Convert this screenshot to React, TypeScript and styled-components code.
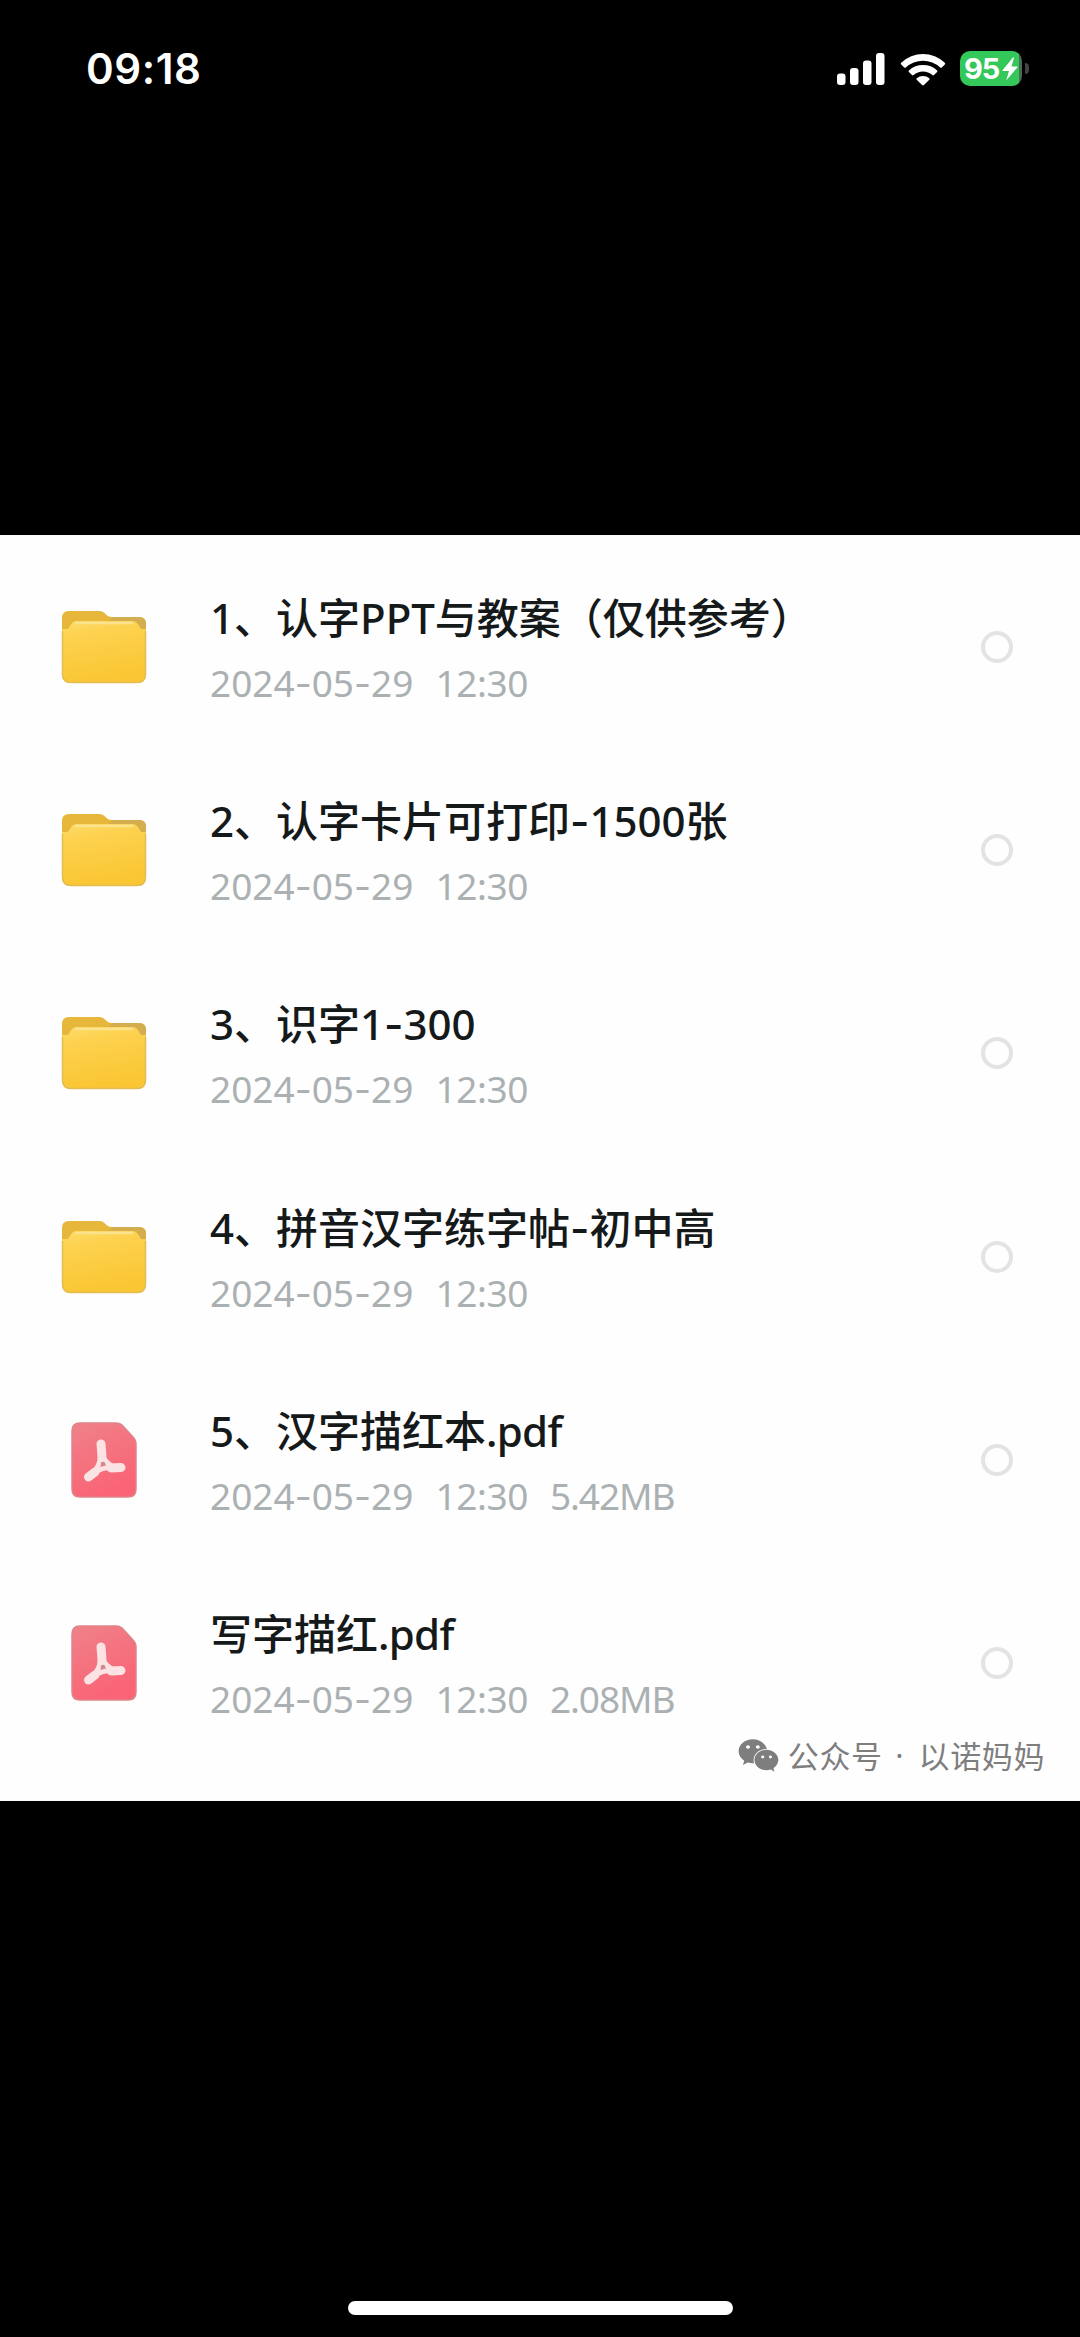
import React from 'react';
import styled, { createGlobalStyle } from 'styled-components';
import { FaWeixin } from 'react-icons/fa';

const GlobalStyle = createGlobalStyle`
  * { box-sizing: border-box; }
  html, body { margin: 0; padding: 0; background: #000; }
  body { font-family: "Noto Sans", "Noto Sans CJK SC", sans-serif; }
`;

const Screen = styled.div`
  width: 1080px;
  height: 2337px;
  background: #000;
  display: flex;
  flex-direction: column;
  align-items: center;
  overflow: hidden;
`;

const StatusBar = styled.header`
  width: 100%;
  height: 535px;
  flex: none;
  display: flex;
  justify-content: space-between;
  align-items: flex-start;
  padding: 43px 51px 0 86px;
`;

const Clock = styled.time`
  font: 600 42px/52px Inter, sans-serif;
  color: #fff;
  letter-spacing: 0.6px;
`;

const StatusIcons = styled.div`
  display: flex;
  align-items: center;
  height: 51px;
`;

const SignalIcon = styled.svg`
  width: 48px;
  height: 32px;
  margin-right: 15px;
`;

const WifiIcon = styled.svg`
  width: 46px;
  height: 34px;
  margin-right: 14px;
`;

const Battery = styled.div`
  display: flex;
  align-items: center;
  justify-content: center;
  width: 62px;
  height: 35px;
  border-radius: 10px;
  background: linear-gradient(90deg, #34c759 0 59px, #4b6b52 59px);
  color: #fff;
  font: 700 29px/35px Inter, sans-serif;
  letter-spacing: -1.2px;
`;

const BoltIcon = styled.svg`
  width: 16px;
  height: 24px;
  margin-left: 3px;
`;

const BatteryTip = styled.div`
  width: 4px;
  height: 11px;
  margin-left: 3px;
  border-radius: 0 4px 4px 0;
  background: #444;
`;

const Panel = styled.main`
  position: relative;
  width: 100%;
  height: 1266px;
  flex: none;
  padding-top: 10px;
  background: #fefefe;
`;

const FileRow = styled.article`
  display: grid;
  grid-template-columns: 88px 1fr 32px;
  column-gap: 62px;
  align-items: center;
  height: 203.33px;
  padding: 0 67px 0 60px;
`;

const IconCell = styled.div`
  display: flex;
  justify-content: center;
`;

const FileText = styled.div`
  display: flex;
  flex-direction: column;
  gap: 5px;
  padding-top: 7px;
  white-space: nowrap;
`;

const Title = styled.h2`
  margin: 0;
  height: 60px;
  font-family: "Noto Sans", "Noto Sans CJK SC", sans-serif;
  font-weight: 500;
  font-size: 42px;
  line-height: 60px;
  color: #15191a;
`;

const Extension = styled.span`
  letter-spacing: -0.7px;
`;

const Meta = styled.div`
  display: flex;
  gap: 22px;
  height: 60px;
  font-size: 37px;
  line-height: 60px;
  color: #abb1b2;
`;

const Time = styled.span`
  letter-spacing: -0.4px;
`;

const Size = styled.span`
  letter-spacing: -1.1px;
`;

const Dash = styled.span`
  font-family: Inter, sans-serif;
`;

const Ring = styled.span`
  width: 32px;
  height: 32px;
  border: 4px solid #e3e3e3;
  border-radius: 50%;
`;

const Watermark = styled.footer`
  position: absolute;
  right: 35px;
  bottom: 24px;
  display: flex;
  align-items: center;
  height: 44px;
  color: #7e7e7e;
  font: 400 31px/44px "Noto Sans CJK SC", sans-serif;
  letter-spacing: 0.6px;

  svg { width: 43px; height: 37px; margin-right: 8px; }
`;

const WatermarkDot = styled.span`
  width: 36px;
  padding-right: 2px;
  text-align: center;
  font-family: "Noto Sans", sans-serif;
`;

const HomeIndicator = styled.div`
  width: 385px;
  height: 14px;
  margin-top: auto;
  margin-bottom: 22px;
  border-radius: 7px;
  background: #fff;
`;

type FileItem = { kind: 'folder' | 'pdf'; title: string; extension?: string; size?: string };

const files: FileItem[] = [
  { kind: 'folder', title: '1、认字PPT与教案（仅供参考）' },
  { kind: 'folder', title: '2、认字卡片可打印-1500张' },
  { kind: 'folder', title: '3、识字1-300' },
  { kind: 'folder', title: '4、拼音汉字练字帖-初中高' },
  { kind: 'pdf', title: '5、汉字描红本', extension: '.pdf', size: '5.42MB' },
  { kind: 'pdf', title: '写字描红', extension: '.pdf', size: '2.08MB' },
];

/** Sets hyphens in the wider dash style, leaving the rest of the text as is. */
function Dashed({ text }: { text: string }) {
  return (
    <span>
      {text.split('-').map((part, i) => (
        <React.Fragment key={i}>
          {i > 0 && <Dash>-</Dash>}
          {part}
        </React.Fragment>
      ))}
    </span>
  );
}

function FolderIcon() {
  return (
    <svg width="86" height="74" viewBox="0 0 86 74">
      <defs>
        <linearGradient id="folderFront" x1="0" y1="0" x2="0.25" y2="1">
          <stop offset="0" stopColor="#fddc6c" />
          <stop offset="0.25" stopColor="#fdd250" />
          <stop offset="1" stopColor="#fac633" />
        </linearGradient>
      </defs>
      <path d="M1 22V8q0-7 7-7h30q4 0 6.500 3t6.500 3h27q7 0 7 7v8z" fill="#e7b73c" />
      <path d="M52 7h26q7 0 7 7v6H76l-4-8H46z" fill="#d4ae4e" />
      <path d="M1 19h6l4-6q2-2 5-2h56q3 0 5 3l3 5h5v45q0 9-9 9H10q-9 0-9-9z" fill="url(#folderFront)" />
      <path d="M1.500 21v43q0 8.500 8.500 8.500h66q8.500 0 8.500-8.500V21" fill="none" stroke="#e2bd55" strokeWidth="1.500" />
      <path d="M14 13h58" stroke="#fbe28c" strokeWidth="2.500" />
    </svg>
  );
}

function PdfIcon() {
  return (
    <svg width="66" height="76" viewBox="0 0 66 76">
      <defs>
        <linearGradient id="pdfPage" x1="0" y1="0" x2="0.4" y2="1">
          <stop offset="0" stopColor="#ef8289" />
          <stop offset="1" stopColor="#fa6476" />
        </linearGradient>
      </defs>
      <path d="M9 1h36q4 0 7 3l10 11q3 3 3 7v45q0 8-8 8H9q-8 0-8-8V9q0-8 8-8z" fill="url(#pdfPage)" stroke="#df838b" strokeWidth="1.500" />
      <g fill="none" stroke="#fbe3e4" strokeLinecap="round" strokeLinejoin="round">
        <path d="M30 22Q31 33 31 38" strokeWidth="9" />
        <path d="M40 46L50 45.500" strokeWidth="9" />
        <path d="M24 50L17.500 55" strokeWidth="9" />
        <path d="M31 33Q34 41 43 45Q30 45 20 53Q29 45 30 33Z" strokeWidth="5" />
      </g>
      <circle cx="32" cy="42" r="2.300" fill="#cf8a90" />
    </svg>
  );
}

export default function App() {
  return (
    <>
      <GlobalStyle />
      <Screen>
        <StatusBar>
          <Clock>09:18</Clock>
          <StatusIcons>
            <SignalIcon viewBox="0 0 48 32" fill="#fff">
              <rect x="0" y="20.500" width="8.500" height="11.500" rx="3" />
              <rect x="13" y="15" width="8.500" height="17" rx="3" />
              <rect x="26" y="7.500" width="8.500" height="24.500" rx="3" />
              <rect x="39" y="0" width="8.500" height="32" rx="3" />
            </SignalIcon>
            <WifiIcon viewBox="0 0 46 34" fill="#fff">
              <path d="M1.200 10.800A31.500 31.500 0 0 1 44.800 10.800Q45.600 11.600 44.800 12.400L41.800 15.400Q41 16.100 40.200 15.400A25.500 25.500 0 0 0 5.800 15.400Q5 16.100 4.200 15.400L1.200 12.400Q.4 11.600 1.200 10.800Z" />
              <path d="M8.900 18.500A20.500 20.500 0 0 1 37.100 18.500Q37.900 19.300 37.100 20.100L34 23.100Q33.200 23.800 32.400 23.100A14 14 0 0 0 13.600 23.100Q12.800 23.800 12 23.100L8.900 20.100Q8.100 19.300 8.900 18.500Z" />
              <path d="M16.700 26.200A9.700 9.700 0 0 1 29.300 26.200Q30 27 29.300 27.700L23.900 33.100Q23 33.900 22.100 33.100L16.700 27.700Q16 27 16.700 26.200Z" />
            </WifiIcon>
            <Battery>
              95
              <BoltIcon viewBox="0 0 16 24" fill="#fff">
                <path d="M11 0.500L0.500 13.200Q0.200 14 1 14H7L4.200 23.500L15.500 10.300Q15.800 9.500 15 9.500H9.500L12 1Q11.600 0 11 0.500Z" />
              </BoltIcon>
            </Battery>
            <BatteryTip />
          </StatusIcons>
        </StatusBar>
        <Panel>
          {files.map((file) => (
            <FileRow key={file.title}>
              <IconCell>{file.kind === 'folder' ? <FolderIcon /> : <PdfIcon />}</IconCell>
              <FileText>
                <Title>
                  <Dashed text={file.title} />
                  {file.extension && <Extension>{file.extension}</Extension>}
                </Title>
                <Meta>
                  <Dashed text="2024-05-29" />
                  <Time>12:30</Time>
                  {file.size && <Size>{file.size}</Size>}
                </Meta>
              </FileText>
              <Ring />
            </FileRow>
          ))}
          <Watermark>
            <FaWeixin />
            公众号<WatermarkDot>·</WatermarkDot>以诺妈妈
          </Watermark>
        </Panel>
        <HomeIndicator />
      </Screen>
    </>
  );
}
